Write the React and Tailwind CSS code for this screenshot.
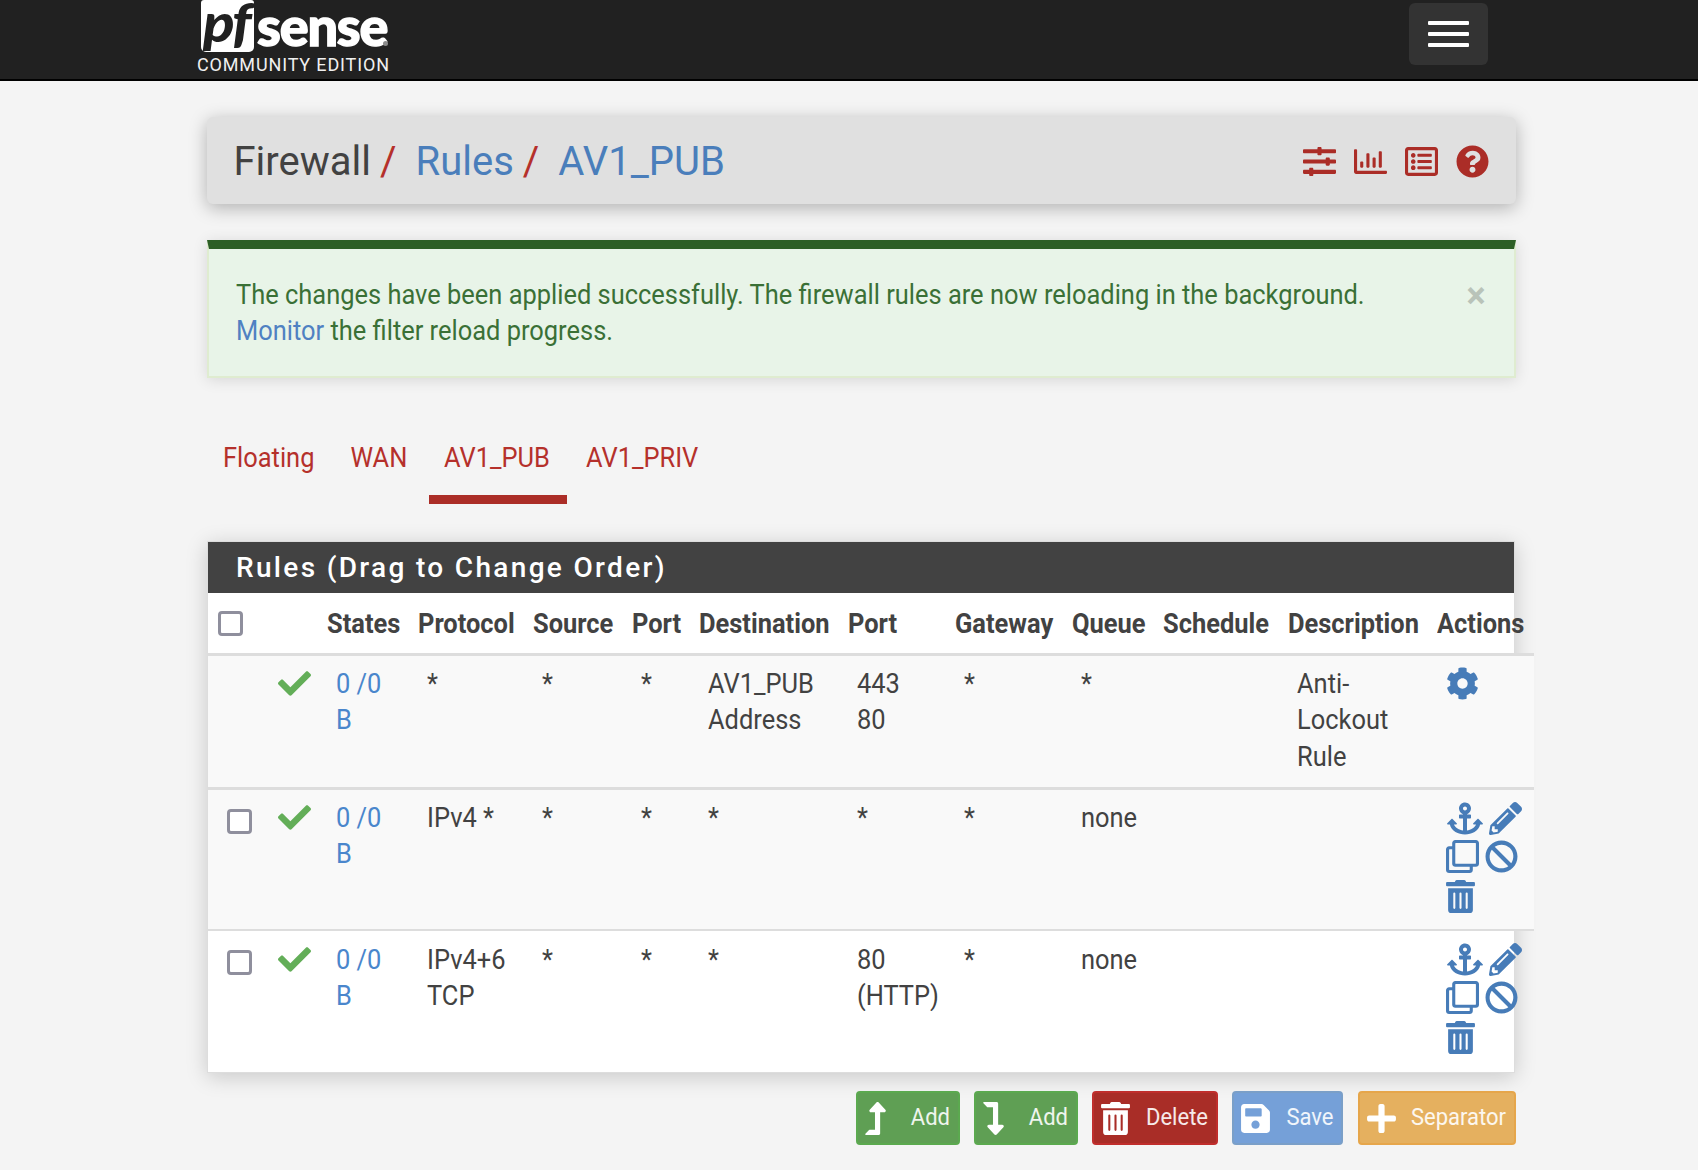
import React from "react";
import {
  FaSlidersH, FaRegChartBar, FaRegListAlt, FaQuestionCircle, FaCheck, FaCog, FaAnchor,
  FaPencilAlt, FaRegClone, FaBan, FaTrashAlt, FaLevelUpAlt, FaLevelDownAlt, FaSave, FaPlus,
} from "react-icons/fa";

const columns = [
  ["w-[55px]", ""], ["w-[55px]", ""], ["w-[91px]", "States"], ["w-[115px]", "Protocol"],
  ["w-[99px]", "Source"], ["w-[67px]", "Port"], ["w-[149px]", "Destination"], ["w-[107px]", "Port"],
  ["w-[117px]", "Gateway"], ["w-[91px]", "Queue"], ["w-[125px]", "Schedule"],
  ["w-[149px]", "Description"], ["w-[106px]", "Actions"],
];

const rules = [
  { cells: ["*", "*", "*", "AV1_PUB\nAddress", "443\n80", "*", "*", "", "Anti-\nLockout\nRule"], locked: true, row: "h-[134px] border-t-[3px] bg-[#f9f9f9]", pad: "pt-[9px]", box: "" },
  { cells: ["IPv4 *", "*", "*", "*", "*", "*", "none", "", ""], row: "h-[142px] border-t-[3px] bg-[#f9f9f9]", pad: "pt-[9px]", box: "mt-[19px]" },
  { cells: ["IPv4+6\nTCP", "*", "*", "*", "80\n(HTTP)", "*", "none", "", ""], row: "h-[142px] border-t-2", pad: "pt-[10px]", box: "mt-[19px]" },
];

/* Text block with slightly heightened letters on a 36.4px line pitch. */
function Tall({ children, className = "" }) {
  return <div className={`origin-top scale-y-[1.06] whitespace-pre leading-[34.4px] ${className}`}>{children}</div>;
}

function Box({ className = "" }) {
  return <span className={`block h-[25px] w-[25px] rounded-[4px] border-[3px] border-[#8f8f9d] bg-white ${className}`} />;
}

function Logo() {
  return (
    <div className="ml-[197px] w-[200px]">
      <div className="flex h-[52px]">
        <div className="relative ml-[4px] h-[52px] w-[53px] rounded-[5px] rounded-t-[3px] bg-white">
          <span className="absolute left-[2px] top-[-2px] origin-left scale-x-[1.1] font-['Lato'] text-[53px] font-black italic leading-[48px] tracking-[-2px] text-[#212121]">pf</span>
        </div>
        <span className="ml-[3px] mt-[2px] w-[126px] font-['Lato'] text-[54px] font-black leading-[48px] tracking-[-1.2px] text-white [-webkit-text-stroke:1.4px_white]">sense</span>
        <span className="mt-[41px] h-[5px] w-[5px] shrink-0 rounded-full bg-[#8a8a8a]" />
      </div>
      <div className="mt-[4px] whitespace-nowrap text-[18px] leading-[18px] tracking-[0.85px] text-[#f0f0f0]">COMMUNITY EDITION</div>
    </div>
  );
}

function Actions({ locked }) {
  if (locked) return <FaCog className="ml-[18px] mt-[11px] size-[33px]" />;
  return (
    <div className="ml-[18px] mt-[12px] flex w-[80px] flex-wrap">
      <FaAnchor className="ml-px h-[33px] w-[36px]" />
      <FaPencilAlt className="ml-[6px] size-[33px]" />
      <FaRegClone className="mt-[5px] size-[33px]" />
      <FaBan className="ml-[6px] mt-[5px] size-[33px]" />
      <FaTrashAlt className="mt-[7px] h-[33px] w-[29px]" />
    </div>
  );
}

function Button({ icon, label, className }) {
  return (
    <button className={`flex h-[54px] items-center justify-between rounded-[4px] border-2 pl-[7px] pr-[7.5px] text-[22px] text-white/90 ${className}`}>
      {icon}
      <span className="mt-px scale-y-[1.05]">{label}</span>
    </button>
  );
}

export default function App() {
  return (
    <div className="h-[1170px] w-[1698px] overflow-hidden bg-[#f4f4f4] font-['Roboto',sans-serif] text-[25.45px] leading-[36.4px] text-[#424242]">
      <header className="flex h-[81px] justify-between border-b-2 border-black bg-[#212121]">
        <Logo />
        <button className="mr-[210px] mt-[3px] flex h-[62px] w-[79px] flex-col items-center justify-center gap-[7px] rounded-[6px] bg-[#333]">
          <span className="h-[4px] w-[41px] rounded-[1px] bg-white" />
          <span className="h-[4px] w-[41px] rounded-[1px] bg-white" />
          <span className="h-[4px] w-[41px] rounded-[1px] bg-white" />
        </button>
      </header>

      <main className="ml-[206.5px] w-[1309px]">
        <div className="mt-[36px] flex h-[87px] items-center justify-between rounded-[6px] bg-[#e0e0e0] pl-[27px] pr-[27px] shadow-[0_4px_18px_rgba(0,0,0,0.28)]">
          <h1 className="mt-[2px] flex scale-y-[1.02] whitespace-pre text-[40px] leading-[44px]">
            <span>Firewall</span>
            <span className="ml-[9px] text-[#b5302b]">/</span>
            <span className="ml-[19px] text-[#4a7ebb]">Rules</span>
            <span className="ml-[9px] text-[#b5302b]">/</span>
            <span className="ml-[19px] text-[#4a7ebb]">AV1_PUB</span>
          </h1>
          <div className="mt-px flex gap-[18px] text-[33px] text-[#ab2d27]">
            <FaSlidersH /><FaRegChartBar /><FaRegListAlt /><FaQuestionCircle />
          </div>
        </div>

        <div className="mt-[36px] flex h-[138px] justify-between border-2 border-t-[9px] border-[#dfecd0] border-t-[#2d5f26] bg-[#e8f4e8] pl-[27.5px] pt-[27px] text-[#3a7036] shadow-[0_2px_14px_rgba(0,0,0,0.12)]">
          <Tall>
            The changes have been applied successfully. The firewall rules are now reloading in the background.<br />
            <span className="text-[#4f81c2]">Monitor</span> the filter reload progress.
          </Tall>
          <span className="mr-[28px] mt-[2px] text-[36px] font-bold leading-[36px] text-[#b9c3b9]">×</span>
        </div>

        <nav className="mt-[61px] flex h-[65px] text-[#b5302b]">
          <span className="w-[128.5px] pl-[16.5px]"><Tall>Floating</Tall></span>
          <span className="w-[93.5px] pl-[15.5px]"><Tall>WAN</Tall></span>
          <span className="w-[138px] border-b-[9px] border-[#ab2d27] pl-[15.5px]"><Tall>AV1_PUB</Tall></span>
          <span className="pl-[19.5px]"><Tall>AV1_PRIV</Tall></span>
        </nav>

        <section className="ml-[0.5px] mt-[37px] h-[532px] w-[1308px] border border-[#ddd] bg-white shadow-[0_4px_20px_rgba(0,0,0,0.18)]">
          <h2 className="h-[51px] bg-[#424242] pl-[28px] text-[28px] font-medium leading-[52px] tracking-[2.33px] text-white">Rules (Drag to Change Order)</h2>
          <table className="w-[1326px] table-fixed border-collapse text-left">
            <thead>
              <tr className="h-[61px]">
                {columns.map(([w, label], i) => (
                  <th key={i} className={`${w} p-0 pl-[9px] font-bold`}>{i === 0 ? <Box className="ml-px mt-[2px]" /> : <Tall className="mb-[2px]">{label}</Tall>}</th>
                ))}
              </tr>
            </thead>
            <tbody>
              {rules.map((rule, i) => (
                <tr key={i} className={`border-[#ddd] align-top ${rule.row}`}>
                  <td className="p-0">{!rule.locked && <Box className={`ml-[19px] ${rule.box}`} />}</td>
                  <td className="p-0 pl-[14.5px] pt-[11.5px] text-[#63ae58]"><FaCheck className="size-[33px]" /></td>
                  <td className={`p-0 pl-[18px] text-[#4a86cc] ${rule.pad}`}><Tall>0 /0<br />B</Tall></td>
                  {rule.cells.map((cell, j) => (
                    <td key={j} className={`p-0 pl-[18px] ${rule.pad}`}><Tall>{cell}</Tall></td>
                  ))}
                  <td className="p-0 text-[#477cb8]"><Actions locked={rule.locked} /></td>
                </tr>
              ))}
            </tbody>
          </table>
        </section>

        <div className="mt-[18px] flex justify-end gap-[14.5px]">
          <Button className="w-[103.5px] border-[#5ba94f] bg-[#5f9f54]" icon={<FaLevelUpAlt className="h-[33px] w-[21px] text-white" />} label="Add" />
          <Button className="w-[103.5px] border-[#5ba94f] bg-[#5f9f54]" icon={<FaLevelDownAlt className="h-[33px] w-[21px] text-white" />} label="Add" />
          <Button className="w-[125.5px] border-[#c02e2c] bg-[#a92d27]" icon={<FaTrashAlt className="h-[33px] w-[29px] text-white" />} label="Delete" />
          <Button className="w-[111px] border-[#7a9fc8] bg-[#75a0d8]" icon={<FaSave className="h-[33px] w-[29px] text-white" />} label="Save" />
          <Button className="w-[158px] border-[#e6a64b] bg-[#e5b05f]" icon={<FaPlus className="h-[33px] w-[29px] text-white" />} label="Separator" />
        </div>
      </main>
    </div>
  );
}
